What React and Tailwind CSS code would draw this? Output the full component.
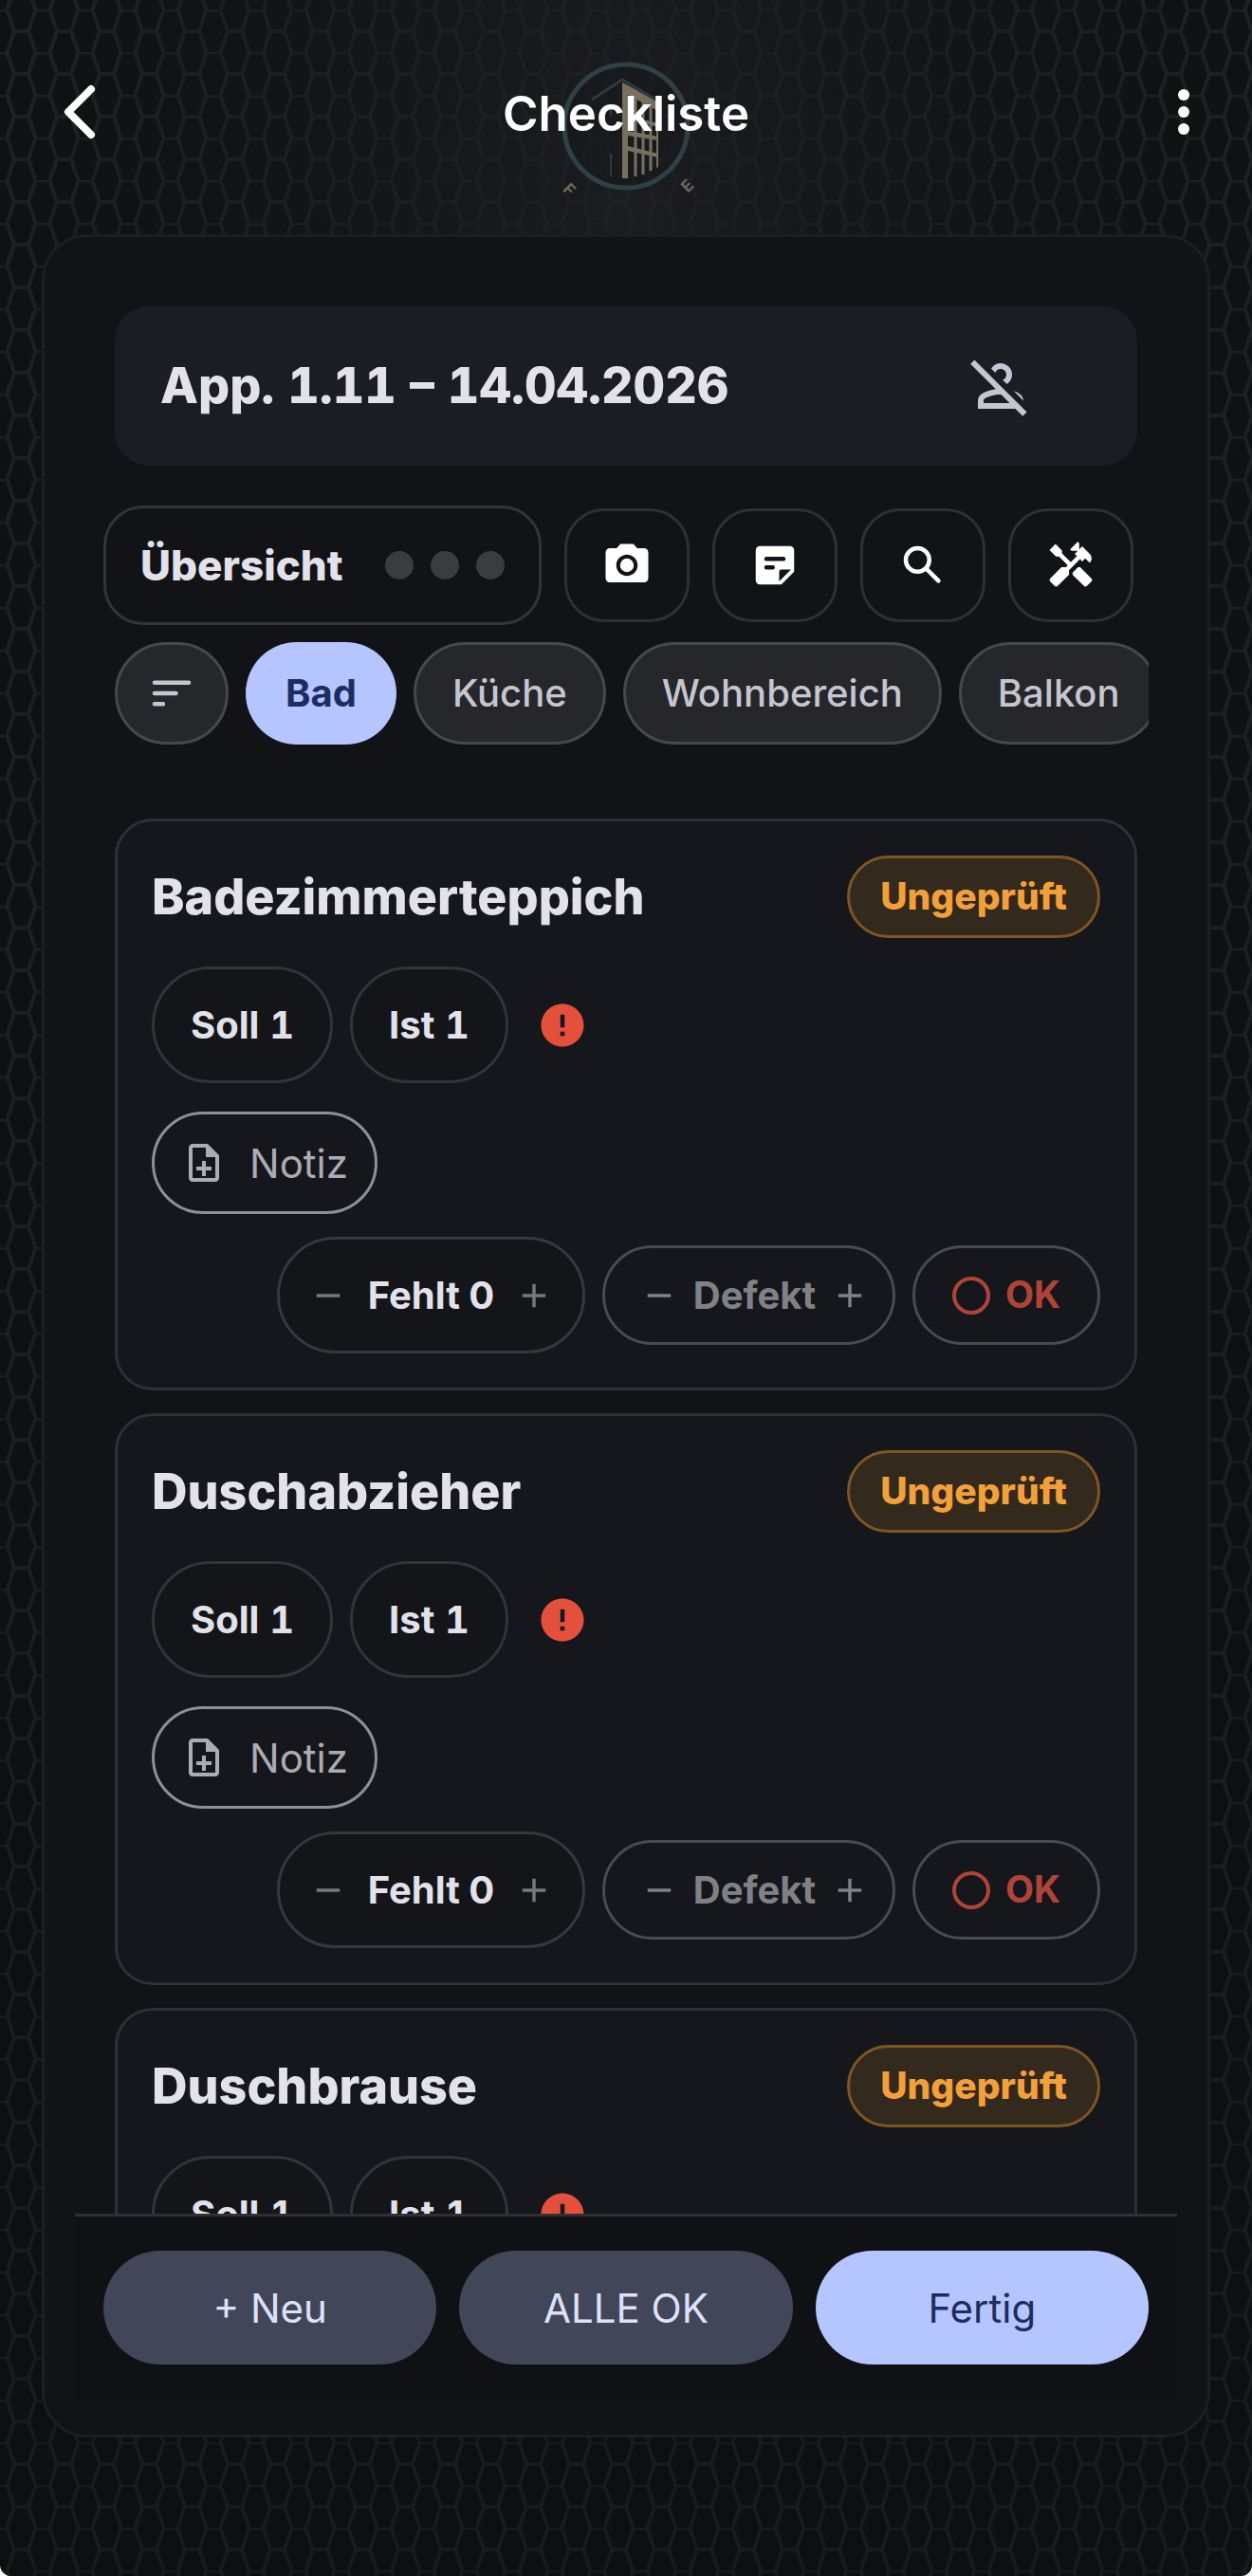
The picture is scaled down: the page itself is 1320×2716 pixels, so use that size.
import React, { useState } from 'react';
import {
  MdAdd,
  MdCameraAlt,
  MdError,
  MdHandyman,
  MdOutlineNoteAdd,
  MdOutlinePersonOff,
  MdRemove,
} from 'react-icons/md';

const rooms = ['Bad', 'Küche', 'Wohnbereich', 'Balkon'];

const items = [
  { id: 1, name: 'Badezimmerteppich', target: 1, actual: 1, missing: 0 },
  { id: 2, name: 'Duschabzieher', target: 1, actual: 1, missing: 0 },
  { id: 3, name: 'Duschbrause', target: 1, actual: 1, missing: 0 },
];

const HexBackground = () => (
  <svg className="absolute inset-0 h-full w-full" aria-hidden="true">
    <defs>
      <pattern id="hex" y="10" width="45" height="45" patternUnits="userSpaceOnUse">
        <path
          d="M15 23 L30 23 L37.5 0.5 L30 -22 M15 23 L7.5 45.5 M15 23 L7.5 0.5 L15 -22 M30 23 L37.5 45.5 M37.5 0.5 L52.5 0.5 M-7.5 0.5 L7.5 0.5"
          fill="none"
          stroke="#1f2123"
          strokeWidth="4"
        />
      </pattern>
      <radialGradient id="glow" cx="50%" cy="8%" r="55%">
        <stop offset="0%" stopColor="#1e2024" stopOpacity="0.8" />
        <stop offset="100%" stopColor="#101113" stopOpacity="0" />
      </radialGradient>
      <linearGradient id="fade" x1="0" y1="0" x2="0" y2="1">
        <stop offset="0%" stopColor="#08090a" stopOpacity="0" />
        <stop offset="100%" stopColor="#08090a" stopOpacity="0.3" />
      </linearGradient>
    </defs>
    <rect width="100%" height="100%" fill="#101113" />
    <rect width="100%" height="100%" fill="url(#hex)" />
    <rect width="100%" height="100%" fill="url(#glow)" />
    <rect width="100%" height="100%" fill="url(#fade)" />
  </svg>
);

const Logo = () => (
  <svg className="absolute top-14 left-1/2 h-[148px] w-40 -translate-x-1/2" viewBox="0 0 160 148" aria-hidden="true">
    <circle cx="80" cy="77" r="65" fill="#15181b" fillOpacity="0.5" stroke="#2f4047" strokeWidth="5" />
    <path d="M44 49 L76 28 L110 48" fill="none" stroke="#2c3b42" strokeWidth="3" />
    <path d="M64 106 V130 M64 54 V66" stroke="#2c3b42" strokeWidth="2" />
    <path d="M76 31 L82 34 V132 H76 Z" fill="#77705f" />
    <path
      d="M82 34 L114 52 V120 L112 121 V60 L82 44 Z M82 66 L114 74 V78 L82 70 Z M82 82 L114 88 V92 L82 87 Z M82 98 L114 106 V110 L82 103 Z"
      fill="#77705f"
    />
    <path d="M90 44 V130 M98 48 V128 M106 52 V124" stroke="#77705f" strokeWidth="3" />
    <text transform="translate(16 148) rotate(45)" textAnchor="middle" fontSize="17" fontWeight="700" fill="#6d685c">
      F
    </text>
    <text transform="translate(149 144) rotate(-45)" textAnchor="middle" fontSize="17" fontWeight="700" fill="#6d685c">
      E
    </text>
  </svg>
);

const NoteIcon = () => (
  <svg className="size-[54px]" viewBox="0 0 24 24" fill="currentColor" aria-hidden="true">
    <path
      fillRule="evenodd"
      d="M19 3H5a2 2 0 0 0-2 2v14c0 1.1.9 2 2 2h10l6-6V5a2 2 0 0 0-2-2zM8 8h8a1 1 0 0 1 0 2H8a1 1 0 0 1 0-2zm3 6H8a1 1 0 0 1 0-2h3a1 1 0 0 1 0 2zm3 5.5V15a1 1 0 0 1 1-1h4.5z"
    />
  </svg>
);

const SearchIcon = () => (
  <svg className="size-[54px]" viewBox="0 0 24 24" fill="none" stroke="currentColor" strokeWidth="2" strokeLinecap="round" aria-hidden="true">
    <circle cx="9.5" cy="9.5" r="5.5" />
    <path d="M14 14 L19.3 19.3" />
  </svg>
);

const SortIcon = () => (
  <svg className="size-[54px]" viewBox="0 0 24 24" fill="none" stroke="currentColor" strokeWidth="2" strokeLinecap="round" aria-hidden="true">
    <path d="M4 7 H20 M4 12 H14 M4 17 H8" />
  </svg>
);

const ToolButton = ({ label, children }) => (
  <button
    type="button"
    aria-label={label}
    className="flex h-[120px] w-[132px] shrink-0 items-center justify-center rounded-[42px] border-3 border-[#2f3034] text-white"
  >
    {children}
  </button>
);

const Pill = ({ children }) => (
  <span className="flex h-[123px] items-center rounded-full border-3 border-[#333438] bg-[#141518] px-[38px] text-[40px] font-bold text-[#e3e1e9] tabular-nums">
    {children}
  </span>
);

const ItemCard = ({ item }) => {
  const [missing, setMissing] = useState(item.missing);
  const [defect, setDefect] = useState(0);

  return (
    <article className="shrink-0 rounded-[40px] border-3 border-[#2f3034] bg-[#16171c] p-9">
      <div className="flex items-center justify-between">
        <h2 className="text-[52px] leading-[60px] font-extrabold text-[#e3e1e9]">{item.name}</h2>
        <span className="flex h-[87px] items-center rounded-full border-3 border-[#7d5624] bg-[#33291c] px-8 text-[39px] font-extrabold text-[#f3a03a]">
          Ungeprüft
        </span>
      </div>

      <div className="mt-[30px] flex items-center gap-[18px]">
        <Pill>Soll {item.target}</Pill>
        <Pill>Ist {item.actual}</Pill>
        <MdError className="ml-3 size-[54px] text-[#e5503d]" />
      </div>

      <button
        type="button"
        className="mt-[30px] flex h-[108px] items-center gap-6 rounded-full border-3 border-[#8f9095] px-7 text-[42px] text-[#acacb2]"
      >
        <MdOutlineNoteAdd className="size-12" />
        Notiz
      </button>

      <div className="mt-6 flex items-center justify-end gap-[18px]">
        <div className="flex h-[123px] w-[325px] items-center justify-between rounded-full border-3 border-[#37383c] bg-[#141518] px-[30px] text-[#77787c]">
          <button type="button" aria-label="Fehlt verringern" onClick={() => setMissing(Math.max(0, missing - 1))}>
            <MdRemove className="size-[42px]" />
          </button>
          <span className="text-[40px] font-bold text-[#e3e1e9]">Fehlt {missing}</span>
          <button type="button" aria-label="Fehlt erhöhen" onClick={() => setMissing(missing + 1)}>
            <MdAdd className="size-[42px]" />
          </button>
        </div>
        <div className="flex h-[105px] w-[309px] items-center justify-between rounded-full border-3 border-[#4a4b4f] pr-6 pl-9 text-[#808186]">
          <button type="button" aria-label="Defekt verringern" onClick={() => setDefect(Math.max(0, defect - 1))}>
            <MdRemove className="size-[42px]" />
          </button>
          <span className="text-[40px] font-bold">Defekt{defect > 0 ? ` ${defect}` : ''}</span>
          <button type="button" aria-label="Defekt erhöhen" onClick={() => setDefect(defect + 1)}>
            <MdAdd className="size-[42px]" />
          </button>
        </div>
        <button
          type="button"
          className="flex h-[105px] w-[198px] items-center justify-center gap-4 rounded-full border-3 border-[#4a4b4f] text-[39px] font-bold text-[#b04437]"
        >
          <span className="size-10 rounded-full border-4 border-[#b04437]" />
          OK
        </button>
      </div>
    </article>
  );
};

const App = () => {
  const [room, setRoom] = useState('Bad');

  return (
    <div className="relative flex h-screen flex-col overflow-hidden rounded-b-xl font-['Inter','Liberation_Sans',sans-serif]">
      <HexBackground />
      <Logo />

      <header className="relative flex h-[247px] shrink-0 items-start justify-between pt-[82px] pr-6 pl-14 text-white">
        <button type="button" aria-label="Zurück" className="flex h-[72px] w-16 items-center">
          <svg className="h-[64px] w-12" viewBox="0 0 48 64" fill="none" stroke="currentColor" strokeWidth="8" strokeLinecap="round" strokeLinejoin="round">
            <path d="M40 8 L16 32 L40 56" />
          </svg>
        </button>
        <h1 className="text-[51px] leading-[76px] font-semibold">Checkliste</h1>
        <button type="button" aria-label="Menü" className="flex h-[72px] w-24 flex-col items-center justify-center gap-1.5">
          <span className="size-3 rounded-full bg-white" />
          <span className="size-3 rounded-full bg-white" />
          <span className="size-3 rounded-full bg-white" />
        </button>
      </header>

      <main className="relative mx-11 mb-[146px] flex min-h-0 flex-1 flex-col rounded-[48px] border-3 border-[#1d1e22] bg-[#121317] px-8 pt-8 pb-[34px]">
        <div className="mx-[42px] mt-[41px] flex h-[168px] shrink-0 items-center justify-between rounded-[36px] bg-[#1c1d22] pr-[108px] pl-12">
          <p className="text-[52px] font-extrabold text-[#e3e1e9] tabular-nums">App. 1.11 – 14.04.2026</p>
          <MdOutlinePersonOff className="size-[72px] text-[#c6c6d0]" />
        </div>

        <div className="mt-[42px] mr-[46px] ml-[30px] flex shrink-0 items-center gap-6">
          <button
            type="button"
            className="flex h-[126px] flex-1 items-center justify-between rounded-[42px] border-3 border-[#333438] px-9 text-[44px] font-extrabold text-[#e3e1e9]"
          >
            Übersicht
            <span className="flex gap-[18px]">
              <span className="size-[30px] rounded-full bg-[#3b3c40]" />
              <span className="size-[30px] rounded-full bg-[#3b3c40]" />
              <span className="size-[30px] rounded-full bg-[#3b3c40]" />
            </span>
          </button>
          <ToolButton label="Foto">
            <MdCameraAlt className="size-[54px]" />
          </ToolButton>
          <ToolButton label="Notizen">
            <NoteIcon />
          </ToolButton>
          <ToolButton label="Suche">
            <SearchIcon />
          </ToolButton>
          <ToolButton label="Werkzeuge">
            <MdHandyman className="size-[54px]" />
          </ToolButton>
        </div>

        <nav className="mx-[30px] mt-[18px] flex shrink-0 gap-[18px] overflow-hidden pl-3">
          <button
            type="button"
            aria-label="Sortieren"
            className="flex h-[108px] w-[120px] shrink-0 items-center justify-center rounded-full border-3 border-[#47484b] bg-[#26272b] text-[#c6c6d0]"
          >
            <SortIcon />
          </button>
          {rooms.map((name) => (
            <button
              key={name}
              type="button"
              onClick={() => setRoom(name)}
              className={
                name === room
                  ? 'h-[108px] shrink-0 rounded-full bg-[#b4c5ff] px-[42px] text-[40px] font-bold text-[#1d2d61]'
                  : 'h-[108px] shrink-0 rounded-full border-3 border-[#47484b] bg-[#26272b] px-[38px] text-[40px] font-medium text-[#c6c6d0]'
              }
            >
              {name}
            </button>
          ))}
        </nav>

        <div className="mx-[42px] mt-[78px] flex min-h-0 flex-1 flex-col gap-6 overflow-hidden">
          {items.map((item) => (
            <ItemCard key={item.id} item={item} />
          ))}
        </div>

        <footer className="grid shrink-0 grid-cols-3 gap-6 border-t-3 border-[#2f3034] bg-[#101114] px-[30px] pt-9 pb-10 text-[42px]">
          <button type="button" className="h-[120px] rounded-full bg-[#424659] text-[#dde1f9]">
            + Neu
          </button>
          <button type="button" className="h-[120px] rounded-full bg-[#424659] text-[#dde1f9]">
            ALLE OK
          </button>
          <button type="button" className="h-[120px] rounded-full bg-[#b4c5ff] text-[#1d2d61]">
            Fertig
          </button>
        </footer>
      </main>
    </div>
  );
};

export default App;
